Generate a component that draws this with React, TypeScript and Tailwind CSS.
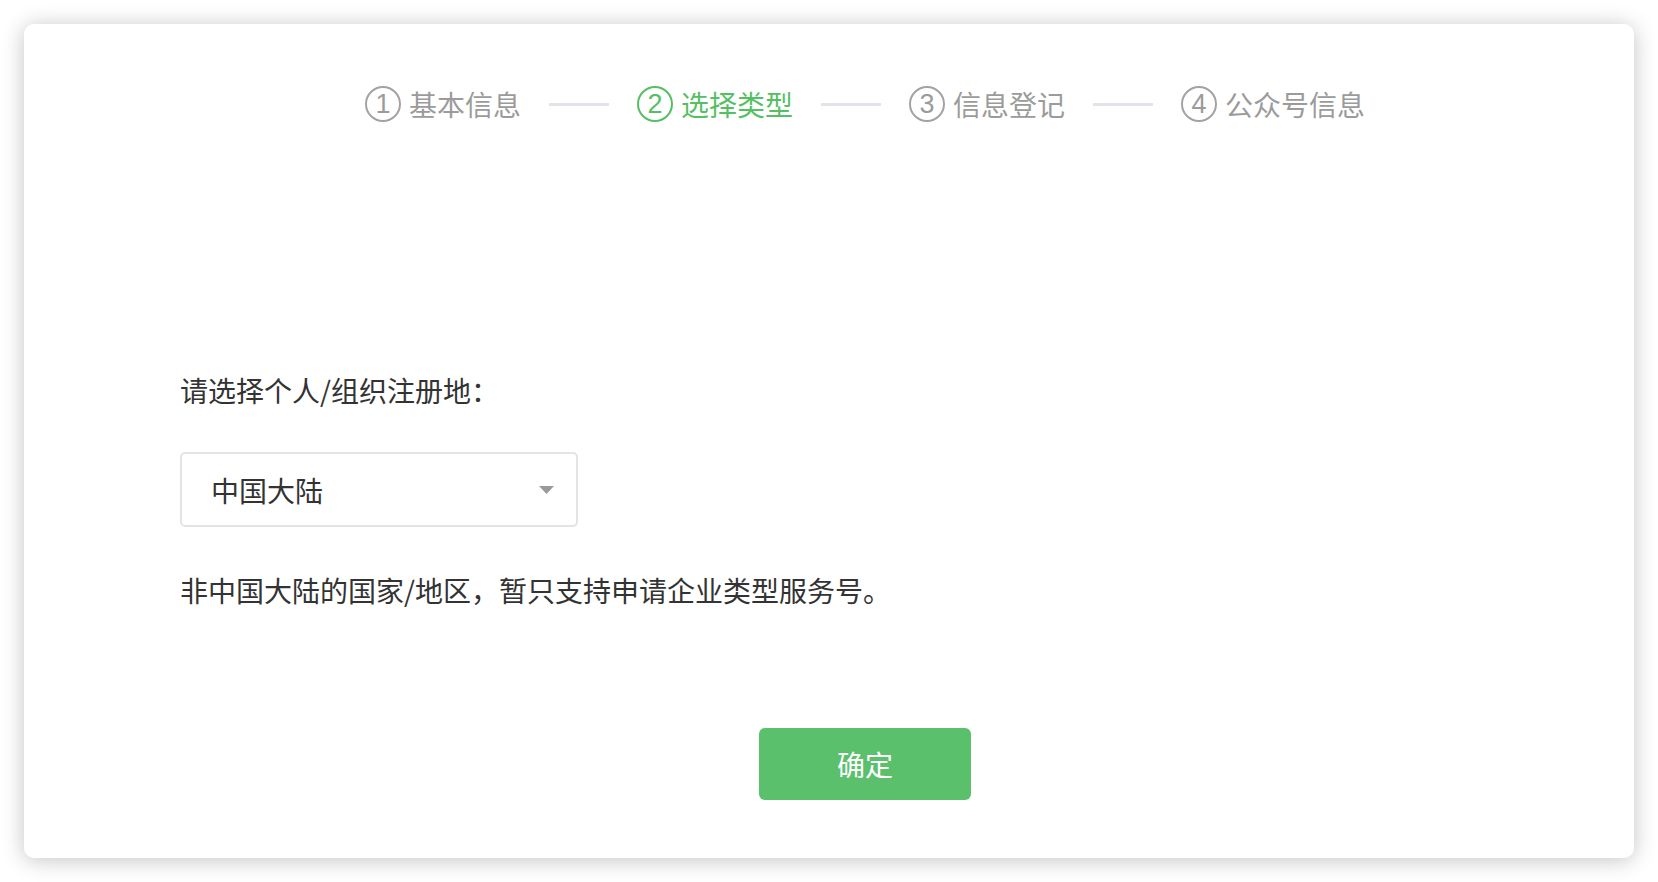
import React from 'react';

const FONT = { fontFamily: '"Noto Sans CJK SC", "Noto Sans", sans-serif' };

const STEPS = [
  { num: 1, label: '基本信息' },
  { num: 2, label: '选择类型' },
  { num: 3, label: '信息登记' },
  { num: 4, label: '公众号信息' },
];

const CURRENT = 2;

const Step: React.FC<{ num: number; label: string; active: boolean }> = ({ num, label, active }) => (
  <div className={`flex items-center gap-2 ${active ? 'text-[#55bf64]' : 'text-[#9b9b9b]'}`}>
    <span
      className={`flex h-[36px] w-[36px] items-center justify-center rounded-full border-2 text-[27px] leading-none ${
        active ? 'border-[#55bf64]' : 'border-[#a3a3a3]'
      }`}
      style={{ fontFamily: '"Liberation Sans", "Noto Sans", sans-serif' }}
    >
      {num}
    </span>
    <span className="text-[28px] leading-[36px]">{label}</span>
  </div>
);

export default function App() {
  return (
    <div className="min-h-screen bg-white pt-6 pb-6 pl-6 pr-6" style={FONT}>
      <div className="flex h-[834px] flex-col rounded-[10px] bg-white pl-[156px] pr-[84px] shadow-[0_2px_22px_rgba(0,0,0,0.24)]">
        {/* steps */}
        <div className="mt-[62px] flex h-[36px] items-center justify-center">
          {STEPS.map((s, i) => (
            <React.Fragment key={s.num}>
              {i > 0 && <span className="mx-[28px] h-[3px] w-[60px] bg-[#e0e4e8]" />}
              <Step num={s.num} label={s.label} active={s.num === CURRENT} />
            </React.Fragment>
          ))}
        </div>

        <div className="mt-[248px] text-[28px] leading-[40px] text-[#333333]">请选择个人/组织注册地：</div>

        <div className="mt-[42px] flex h-[75px] w-[398px] items-center justify-between rounded-[5px] border-2 border-[#e4e4e4] pl-[29px] pr-[22px]">
          <span className="text-[28px] text-[#333333]">中国大陆</span>
          <svg width="15" height="8" viewBox="0 0 15 8">
            <path d="M0 0 H15 L7.5 8 Z" fill="#9a9a9a" />
          </svg>
        </div>

        <div className="mt-[43px] text-[28px] leading-[40px] text-[#333333]">
          非中国大陆的国家/地区，暂只支持申请企业类型服务号。
        </div>

        <div className="mt-[118px] flex justify-center">
          <button className="h-[72px] w-[212px] rounded-[6px] bg-[#5ac06b] text-[28px] text-white">确定</button>
        </div>
      </div>
    </div>
  );
}
